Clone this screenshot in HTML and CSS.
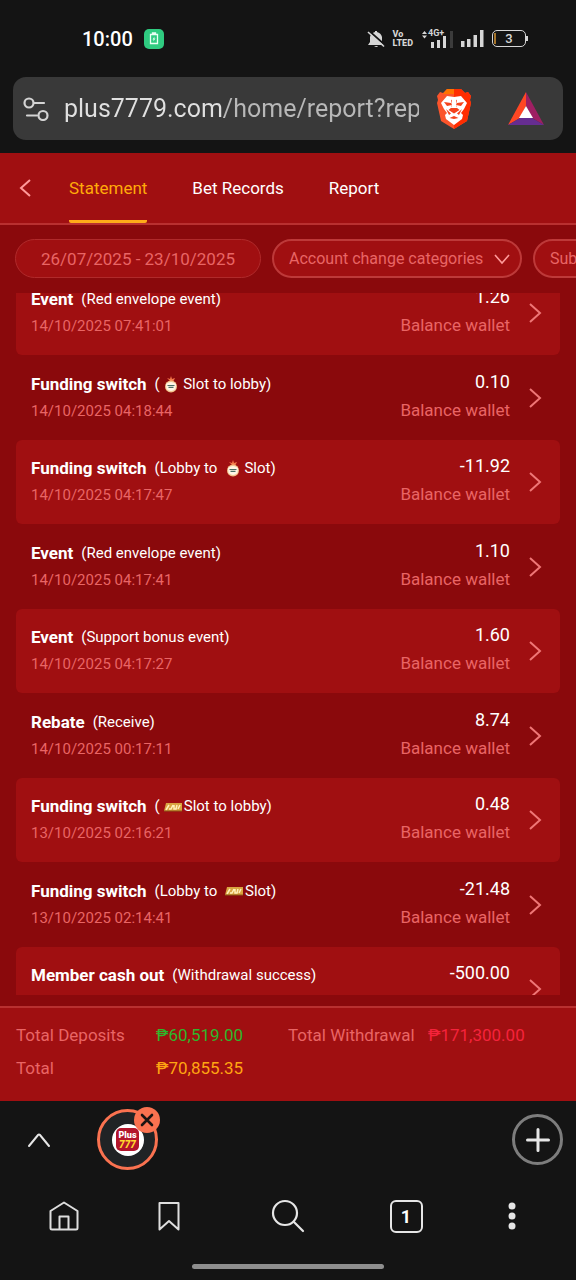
FILE: index.html
```html
<!DOCTYPE html>
<html lang="en">
<head>
<meta charset="utf-8">
<meta name="viewport" content="width=device-width, initial-scale=1">
<title>Statement</title>
<link rel="stylesheet" href="styles.css">
</head>
<body>
<svg class="defs" aria-hidden="true">
  <symbol id="next" viewBox="0 0 14 22"><path d="M2 2l10 9L2 20" fill="none" stroke="currentColor" stroke-width="2"/></symbol>
  <symbol id="down" viewBox="0 0 18 12"><path d="M2 2l7 8 7-8" fill="none" stroke="currentColor" stroke-width="1.600"/></symbol>
  <symbol id="fruit" viewBox="0 0 14 17">
    <path d="M7 6L3 2l3 1 1-3 1 3 3-1-2 4z" fill="#f47a4a"/>
    <circle cx="7" cy="10.500" r="6" fill="#f3c48e"/>
    <path d="M2 8q5-4 10 0l-.5 5q-4.500 4-9 0z" fill="#fff6e6"/>
    <path d="M3.500 9.500h7M4.500 11.300h5" stroke="#4b6f66" stroke-width="1.200"/>
  </symbol>
  <symbol id="gold" viewBox="0 0 20 10">
    <path d="M3 1h16v8H1z" fill="#d9a441"/>
    <path d="M3 8l3-5M6 7h2l2-4M11 3v4h2l1-4M15 7l2-4" fill="none" stroke="#fff0ba" stroke-width="1.500"/>
    <path d="M1 9h18" stroke="#8c5a18"/>
  </symbol>
</svg>

<header class="system">
  <div class="status">
    <time class="clock">10:00</time>
    <svg class="charge" viewBox="0 0 20 20" aria-hidden="true"><rect width="20" height="20" rx="5" fill="#2fcb80"/><path d="M6.500 5.500h7v9h-7zM8.500 5V4h3v1" fill="none" stroke="#e9fff3" stroke-width="1.300"/><path d="M10.500 7.500L8.500 10.500h1.200l-.5 2 2.300-3h-1.300z" fill="#e9fff3"/></svg>
    <div class="signals">
      <svg class="bell" viewBox="0 0 18 18" aria-hidden="true"><path d="M1 15l2-3V7q1-4 5-5V1h2v1q4 1 5 5v5l2 3zM7 16h4q-1 2-4 0z" fill="#d6d6d6"/><path d="M1 0l17 15" stroke="#141414" stroke-width="2"/><path d="M1 2l16 14.500" stroke="#d6d6d6" stroke-width="1.600"/></svg>
      <span class="volte"><span>Vo</span><span>LTED</span></span>
      <span class="cell">
        <svg class="bars-wide" viewBox="0 0 32 18" aria-hidden="true"><path d="M1 4l2.500-3L6 4zM1 5.500l2.500 3 2.500-3z" fill="#d6d6d6"/><path d="M10 12h3v6h-3zM16 10h3v8h-3zM22 6h3v12h-3z" fill="#d6d6d6"/><path d="M29 1h3v17h-3z" fill="#3b3b3b"/></svg>
        <span class="generation">4G+</span>
      </span>
      <svg class="bars" viewBox="0 0 23 17" aria-hidden="true"><path d="M0 11h3.500v6H0zM6 9h3.500v8H6zM12.500 5H16v12h-3.500zM19 0h3.500v17H19z" fill="#d6d6d6"/></svg>
      <span class="battery">3</span>
    </div>
  </div>
  <div class="address">
    <button class="plain" aria-label="Site settings"><svg class="tune" viewBox="0 0 26 24" fill="none" stroke="#d4d4d4" stroke-width="2.200" stroke-linecap="round"><circle cx="6" cy="6" r="4.500"/><path d="M11 6h10M4 18.500h10"/><circle cx="20" cy="18.500" r="4.500"/></svg></button>
    <input class="url" type="text" aria-label="Address" value="plus7779.com/home/report?report">
    <button class="plain" aria-label="Shields"><svg class="shield" viewBox="0 0 36 42"><path d="M11 1h14l4 4 3-1 3 4-1 4 1 3-4 18-13 8L5 33 1 15l1-3-1-4 3-4 3 1z" fill="#fb542b"/><path d="M18 1h7l4 4 3-1 3 4-1 4 1 3-4 18-13 8z" fill="#ff2d00"/><path d="M11 1h7v5H7z" fill="#ff7200"/><path d="M11 8l7 1 7-1 6 7-3 6-3 4 2 2-1 4-8 6-8-6-1-4 2-2-3-4-3-6z" fill="#fff"/><path d="M8 14l7 1 1 2-5 1zM28 14l-7 1-1 2 5 1zM15 11.500l1 1-.5 7-3 2.500 5.500 3.500 5.500-3.500-3-2.500-.5-7 1-1-1 7 1 1.500h-6l1-1.500zM10 21l5 4.500-2 1.500zM26 21l-5 4.500 2 1.500zM13.500 30l4.500-2 4.500 2-4.500 1z" fill="#f5421c"/></svg></button>
    <button class="plain" aria-label="Rewards"><svg class="rewards" viewBox="0 0 36 34"><path d="M18 0L0 33l12-7 6-12z" fill="#ff4724"/><path d="M18 0v14l6 12 12 7z" fill="#9e1f63"/><path d="M0 33h36l-12-7H12z" fill="#662d91"/><path d="M18 14l7 12H11z" fill="#fff"/></svg></button>
  </div>
</header>

<main class="site">
  <nav class="tabs">
    <button class="plain back" aria-label="Back"><svg viewBox="0 0 14 20"><path d="M12 2L3 10l9 8" fill="none" stroke="currentColor" stroke-width="2"/></svg></button>
    <a class="tab active" href="#statement">Statement</a>
    <a class="tab" href="#bets">Bet Records</a>
    <a class="tab" href="#report">Report</a>
  </nav>

  <div class="filters">
    <button class="pill date">26/07/2025 - 23/10/2025</button>
    <div class="picker"><select class="pill" aria-label="Account change categories"><option>Account change categories</option></select><svg class="arrow"><use href="#down"/></svg></div>
    <div class="picker"><select class="pill" aria-label="Subcategories"><option>Subcategories</option></select><svg class="arrow"><use href="#down"/></svg></div>
  </div>

  <div class="viewport">
    <ul class="records">
      <li><a class="record" href="#r1"><span class="what"><span class="title"><b>Event</b><span class="note">(Red envelope event)</span></span><time>14/10/2025 07:41:01</time></span><span class="sum"><span class="amount">1.26</span><span>Balance wallet</span></span><svg class="next"><use href="#next"/></svg></a></li>
      <li><a class="record" href="#r2"><span class="what"><span class="title"><b>Funding switch</b><span class="note">( <svg class="fruit"><use href="#fruit"/></svg> Slot to lobby)</span></span><time>14/10/2025 04:18:44</time></span><span class="sum"><span class="amount">0.10</span><span>Balance wallet</span></span><svg class="next"><use href="#next"/></svg></a></li>
      <li><a class="record" href="#r3"><span class="what"><span class="title"><b>Funding switch</b><span class="note">(Lobby to&nbsp; <svg class="fruit"><use href="#fruit"/></svg> Slot)</span></span><time>14/10/2025 04:17:47</time></span><span class="sum"><span class="amount">-11.92</span><span>Balance wallet</span></span><svg class="next"><use href="#next"/></svg></a></li>
      <li><a class="record" href="#r4"><span class="what"><span class="title"><b>Event</b><span class="note">(Red envelope event)</span></span><time>14/10/2025 04:17:41</time></span><span class="sum"><span class="amount">1.10</span><span>Balance wallet</span></span><svg class="next"><use href="#next"/></svg></a></li>
      <li><a class="record" href="#r5"><span class="what"><span class="title"><b>Event</b><span class="note">(Support bonus event)</span></span><time>14/10/2025 04:17:27</time></span><span class="sum"><span class="amount">1.60</span><span>Balance wallet</span></span><svg class="next"><use href="#next"/></svg></a></li>
      <li><a class="record" href="#r6"><span class="what"><span class="title"><b>Rebate</b><span class="note">(Receive)</span></span><time>14/10/2025 00:17:11</time></span><span class="sum"><span class="amount">8.74</span><span>Balance wallet</span></span><svg class="next"><use href="#next"/></svg></a></li>
      <li><a class="record" href="#r7"><span class="what"><span class="title"><b>Funding switch</b><span class="note">(<svg class="gold"><use href="#gold"/></svg>Slot to lobby)</span></span><time>13/10/2025 02:16:21</time></span><span class="sum"><span class="amount">0.48</span><span>Balance wallet</span></span><svg class="next"><use href="#next"/></svg></a></li>
      <li><a class="record" href="#r8"><span class="what"><span class="title"><b>Funding switch</b><span class="note">(Lobby to <svg class="gold"><use href="#gold"/></svg>Slot)</span></span><time>13/10/2025 02:14:41</time></span><span class="sum"><span class="amount">-21.48</span><span>Balance wallet</span></span><svg class="next"><use href="#next"/></svg></a></li>
      <li><a class="record" href="#r9"><span class="what"><span class="title"><b>Member cash out</b><span class="note">(Withdrawal success)</span></span></span><span class="sum"><span class="amount">-500.00</span></span><svg class="next"><use href="#next"/></svg></a></li>
    </ul>
  </div>

  <dl class="totals">
    <dt>Total Deposits</dt><dd class="green">₱60,519.00</dd>
    <dt>Total Withdrawal</dt><dd class="red">₱171,300.00</dd>
    <dt>Total</dt><dd class="amber">₱70,855.35</dd>
  </dl>
</main>

<footer class="browser">
  <div class="strip">
    <button class="plain" aria-label="Expand tabs"><svg class="up" viewBox="0 0 24 16"><path d="M2 14l9-11q1-1 2 0l9 11" fill="none" stroke="#e6e6e6" stroke-width="2" stroke-linecap="round"/></svg></button>
    <div class="open-tab">
      <button class="ring" aria-label="Plus777 tab"><span class="site-logo"><span class="logo"><span class="plus">Plus</span><span class="sevens">777</span></span></span></button>
      <button class="close" aria-label="Close tab"><svg viewBox="0 0 26 26"><path d="M8 8l10 10M18 8L8 18" stroke="#1a1412" stroke-width="2.600" stroke-linecap="round"/></svg></button>
    </div>
    <button class="add" aria-label="New tab"><svg viewBox="0 0 24 24"><path d="M12 1.500v21M1.500 12h21" stroke="#e6e6e6" stroke-width="3" stroke-linecap="round"/></svg></button>
  </div>
  <nav class="toolbar">
    <button class="plain" aria-label="Home"><svg class="home" viewBox="0 0 30 30" fill="none" stroke="#dedede" stroke-width="2" stroke-linejoin="round"><path d="M1.500 10L15 1.500 28.500 10v17q0 1.500-1.500 1.500H3q-1.500 0-1.500-1.500z"/><path d="M10.500 28V15.500h9V28"/></svg></button>
    <button class="plain" aria-label="Bookmarks"><svg class="bookmark" viewBox="0 0 22 30" fill="none" stroke="#dedede" stroke-width="2" stroke-linejoin="round"><path d="M1.500 2h19v26.500L11 20l-9.500 8.500z"/></svg></button>
    <button class="plain" aria-label="Search"><svg class="search" viewBox="0 0 34 34" fill="none" stroke="#e6e6e6" stroke-width="2.200" stroke-linecap="round"><circle cx="14" cy="14" r="12"/><path d="M23 23l9 9"/></svg></button>
    <button class="count" aria-label="1 open tab">1</button>
    <button class="plain" aria-label="Menu"><svg class="dots" viewBox="0 0 8 28" fill="#e6e6e6"><circle cx="4" cy="4" r="3.500"/><circle cx="4" cy="14" r="3.500"/><circle cx="4" cy="24" r="3.500"/></svg></button>
  </nav>
  <div class="handle"></div>
</footer>
</body>
</html>
```
FILE: styles.css
```css
* { box-sizing: border-box; }
body {
  margin: 0;
  height: 100vh;
  display: flex;
  flex-direction: column;
  overflow: hidden;
  background: #141414;
  color: #fff;
  font-family: Roboto, "Liberation Sans", sans-serif;
  font-size: 16px;
}
button, input, select { font: inherit; color: inherit; }
button { padding: 0; cursor: pointer; }
a { color: inherit; text-decoration: none; }
svg { display: block; flex: none; }
.defs { position: absolute; width: 0; height: 0; }
.plain { border: 0; background: none; display: flex; align-items: center; justify-content: center; }

/* system status and address bar */
.system { padding-bottom: 13px; }
.status { height: 77px; padding: 0 50px 0 82px; display: flex; align-items: center; gap: 11px; }
.clock { font-size: 20px; font-weight: 500; }
.charge { width: 20px; height: 20px; }
.signals { margin-left: auto; display: flex; align-items: center; gap: 8px; color: #d6d6d6; }
.bell { width: 18px; height: 18px; }
.volte { display: flex; flex-direction: column; font-size: 9px; font-weight: 800; line-height: 9px; }
.cell { position: relative; }
.bars-wide { width: 32px; height: 18px; }
.generation { position: absolute; left: 7px; top: -1px; font-size: 9px; font-weight: 700; line-height: 9px; }
.bars { width: 23px; height: 17px; }
.battery {
  width: 34px; height: 17px; border: 1px solid #d6d6d6; border-radius: 5px; text-align: center;
  font-size: 13px; font-weight: 500; line-height: 15px; position: relative;
}
.battery::before { content: ""; position: absolute; left: 1px; top: 2px; bottom: 2px; width: 2px; background: #a5742a; }
.battery::after { content: ""; position: absolute; left: 33px; top: 5px; width: 2px; height: 5px; background: #d6d6d6; }
.address {
  margin: 0 13px; height: 63px; padding: 0 19px 0 10px; border-radius: 13px; background: #393939;
  display: flex; align-items: center;
}
.tune { width: 26px; height: 24px; }
.url {
  flex: 1; min-width: 0; height: 40px; margin: 0 17px 0 15px; padding: 0; border: 0; outline: 0;
  font-size: 25px; color: transparent;
  background: linear-gradient(90deg, #e0e0e0 158px, #b8b8b8 161px);
  -webkit-background-clip: text; background-clip: text;
}
.shield { width: 36px; height: 42px; }
.rewards { width: 36px; height: 34px; margin-left: 36px; }

/* page */
.site { flex: 1; min-height: 0; display: flex; flex-direction: column; background: #8a090c; }
.tabs {
  height: 72px; padding-left: 18px; display: flex; align-items: stretch;
  background: #a00f11; border-bottom: 2px solid #b93030; font-size: 17px;
}
.back { color: #ff9a9a; margin-right: 37px; }
.back svg { width: 14px; height: 20px; }
.tab { display: flex; align-items: center; margin-right: 45px; padding-top: 2px; border-bottom: 3px solid transparent; }
.active { color: #ffaa09; border-radius: 2px; border-bottom-color: #ffaa19; }
.filters { display: flex; gap: 11px; padding: 14px 0 15px 15px; overflow: hidden; color: #e96565; }
.pill {
  height: 39px; width: 100%; padding: 0 36px 0 15px; border: 2px solid #bd3939; border-radius: 20px;
  background: #a00f11; appearance: none; outline: 0;
}
.date { flex: none; width: 246px; padding: 0; border: 1px solid #b02a2b; font-size: 17px; }
.picker { position: relative; flex: none; width: 250px; }
.arrow { position: absolute; right: 11px; top: 14px; width: 18px; height: 12px; color: #ff9a9a; pointer-events: none; }
.viewport { flex: 1; min-height: 0; margin: 0 16px 11px; overflow: hidden; }
.records { list-style: none; margin: -22px 0 0; padding: 0; }
.record { height: 85px; padding: 0 18px 0 15px; display: flex; align-items: center; border-radius: 6px; color: #e96565; }
li:nth-child(odd) .record { height: 84px; background: #a00f11; }
.what, .sum { display: flex; flex-direction: column; line-height: 27px; height: 54px; }
.what { font-size: 15px; }
.title { display: flex; gap: 8px; color: #fff; }
.title b { font-size: 17px; font-weight: 700; }
.note { display: flex; align-items: center; white-space: pre; height: 27px; }
.fruit { width: 14px; height: 17px; margin: 0 1px; }
.gold { width: 20px; height: 10px; margin: 0 1px 0 3px; }
.sum { margin-left: auto; text-align: right; line-height: 28px; height: 60px; font-size: 17px; }
.amount { color: #fff; font-size: 18px; }
.next { width: 14px; height: 22px; margin-left: 18px; color: #ef7676; }
.totals {
  margin: 0; padding: 11px 16px 16px; border-top: 2px solid #b93030; background: #a00f11;
  display: grid; grid-template-columns: 140px 132px 140px 1fr; line-height: 33px; font-size: 17px; color: #e96565;
}
.totals dd { margin: 0; }
.green { color: #2fb52b; }
.red { color: #f5233b; }
.amber { color: #ffa512; }

/* browser controls */
.strip { height: 77px; padding: 0 13px 0 27px; display: flex; align-items: center; }
.up { width: 24px; height: 16px; }
.open-tab { position: relative; margin-left: 46px; }
.ring {
  width: 61px; height: 61px; border: 3px solid #fa7250; border-radius: 50%; background: #202325;
  display: flex; align-items: center; justify-content: center;
}
.site-logo { width: 32px; height: 32px; border-radius: 50%; background: #fff; display: flex; align-items: center; justify-content: center; }
.logo { width: 23px; height: 23px; border-radius: 5px; background: #b3152b; display: flex; flex-direction: column; align-items: center; justify-content: center; font-weight: 900; }
.plus { font-size: 9px; line-height: 10px; color: #fff; }
.sevens { font-size: 10px; line-height: 10px; font-style: italic; color: #ffd52e; }
.close { position: absolute; right: -2px; top: -2px; width: 26px; height: 26px; border: 0; border-radius: 50%; background: #fa7250; }
.add {
  margin-left: auto; width: 51px; height: 51px; border: 3px solid #7d7d7d; border-radius: 50%; background: none;
  display: flex; align-items: center; justify-content: center;
}
.add svg { width: 24px; height: 24px; }
.toolbar {
  height: 76px; padding: 0 12px 0 11px; display: grid; align-items: center; justify-items: center;
  grid-template-columns: 105fr 106fr 131fr 106fr 105fr;
}
.home { width: 30px; height: 30px; }
.bookmark { width: 22px; height: 30px; }
.search { width: 34px; height: 34px; }
.count { width: 33px; height: 33px; border: 2px solid #e6e6e6; border-radius: 6px; background: none; font-size: 18px; font-weight: 700; }
.dots { width: 8px; height: 28px; }
.handle { width: 192px; height: 5px; margin: 10px auto 11px; border-radius: 3px; background: #8e8e8e; }
```
